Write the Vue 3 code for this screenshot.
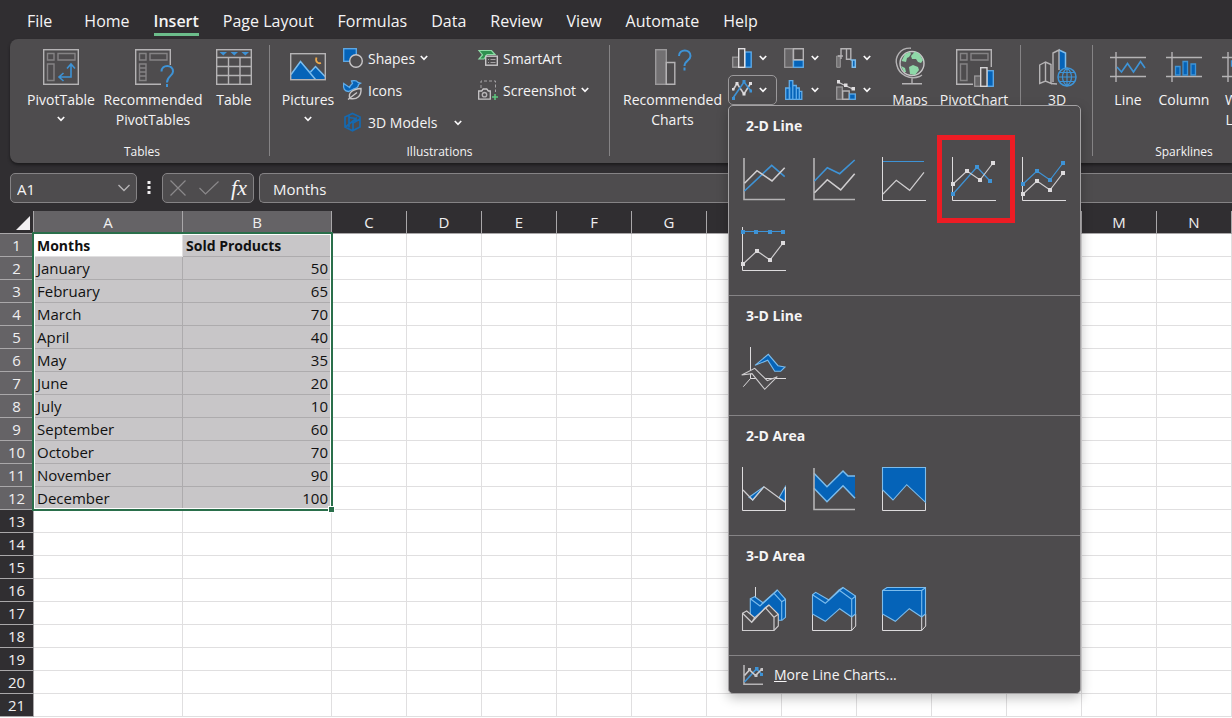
<script setup>
import { h, ref } from 'vue'

const tabs = ['File', 'Home', 'Insert', 'Page Layout', 'Formulas', 'Data', 'Review', 'View', 'Automate', 'Help']
const activeTab = ref('Insert')

const Chevron = () =>
  h('svg', { viewBox: '0 0 8 6', width: 8, height: 6, fill: 'none', stroke: '#f8f7f8', 'stroke-width': 1.7, 'aria-hidden': 'true' }, [
    h('path', { d: 'M.8 1 4 4.3 7.2 1' }),
  ])

const columns = ['A', 'B', 'C', 'D', 'E', 'F', 'G', 'H', 'I', 'J', 'K', 'L', 'M', 'N']
const records = [
  ['Months', 'Sold Products'],
  ['January', 50],
  ['February', 65],
  ['March', 70],
  ['April', 40],
  ['May', 35],
  ['June', 20],
  ['July', 10],
  ['September', 60],
  ['October', 70],
  ['November', 90],
  ['December', 100],
]
const rowCount = 21
const cell = (r, c) => (c < 2 && records[r - 1] ? records[r - 1][c] : '')
const selected = (r, c) => r <= records.length && c < 2

const nameBox = ref('A1')
const formula = ref('Months')
</script>

<template>
  <div class="app">
    <nav class="tabs" aria-label="Ribbon tabs">
      <button v-for="t in tabs" :key="t" type="button" class="tab" :class="{ active: t === activeTab }" @click="activeTab = t">{{ t }}</button>
    </nav>

    <section class="ribbon">
      <div class="group tables">
        <div class="tools">
          <button type="button" class="big w84">
            <svg class="i36" viewBox="0 0 36 36">
              <rect class="g" x=".7" y=".7" width="34.6" height="34.6" />
              <path class="d" d="M4.500 4.500h6.500v6.500H4.500zM15 4.500h17v6.500H15zM4.500 15h6.500v16.500H4.500z" />
              <path class="b w15" d="M28 15.500v12.500H16.500M24 19.500l4-4.500 4 4.500M20.500 24l-4.500 4 4.500 4" />
            </svg>
            <span>PivotTable</span>
            <span class="chev"><Chevron /></span>
          </button>
          <button type="button" class="big w100">
            <svg class="i36" viewBox="0 0 36 36">
              <path class="g" d="M26 35.300H.7V.7h34.600V16" />
              <path class="d" d="M4.500 4.500h6.500v6.500H4.500zM15 4.500h17v6.500H15zM4.500 15h6.500v16.500H4.500z" />
              <path class="d" d="M4.500 19h6.500M4.500 23h6.500M4.500 27h6.500" />
              <path class="b w2" d="M26.500 22.500c0-7.500 11.500-7.500 11.500 0 0 4.500-6 4.500-6 11M32 35v3" />
            </svg>
            <span>Recommended<br />PivotTables</span>
          </button>
          <button type="button" class="big w62">
            <svg class="i36" viewBox="0 0 36 36">
              <rect class="g" x=".7" y=".7" width="34.600" height="34.600" />
              <path class="g" d="M1 8.500h34M1 17.500h34M1 26.500h34M12.500 9v26M24 9v26" />
              <path fill="#3e93d6" d="M3.500 3h7.500L7.300 6.500zM14.500 3H22l-3.700 3.500zM25.500 3H33l-3.700 3.500z" />
            </svg>
            <span>Table</span>
          </button>
        </div>
        <h2>Tables</h2>
      </div>

      <div class="group illustrations">
        <div class="tools">
          <button type="button" class="big w66">
            <svg class="i36" viewBox="0 0 36 36">
              <path class="f" d="M1 25.500 10.500 12 19 21l2.500 0 4-4 9.500 9.500V30H1z" />
              <path class="lb" d="M1 25.500 10.500 12.500 25.500 30.500M20.500 23l5-5.500 9.500 10" />
              <rect class="g" x=".7" y="4.700" width="34.600" height="26" />
              <path fill="none" stroke="#eda94b" stroke-width="1.800" d="M26.500 8.500c-1.500 4 1.500 6.500 4.500 5.500" />
            </svg>
            <span>Pictures</span>
            <span class="chev"><Chevron /></span>
          </button>
          <div class="stack first">
            <button type="button" class="small">
              <svg class="i20" viewBox="0 0 20 20">
                <rect class="f lbs" x=".7" y=".7" width="12.600" height="12.600" />
                <circle cx="13" cy="13" r="6.300" fill="#4e4c4e" stroke="#c8c6c8" stroke-width="1.400" />
              </svg>
              <span>Shapes</span><Chevron />
            </button>
            <button type="button" class="small">
              <svg class="i20" viewBox="0 0 20 20">
                <path class="f lbs" d="M.7 3.500 6.500 7.500C7 5 8.500 4.500 9.500 3.500L8.500 1C12 .3 14 .8 15 2.500L17.500 3.200 15.500 4.500C15.500 7 13 8.500 10.500 9L5.500 11.500C1.500 11.500 0 8.500.7 3.500z" />
                <path d="M18 8.500C10 9 4.500 12.500 7 18.500 14.500 20 18.500 15.500 18 8.500zM5 19.500 14 12.500" fill="#4e4c4e" stroke="#c8c6c8" stroke-width="1.400" />
              </svg>
              <span>Icons</span>
            </button>
            <button type="button" class="small">
              <svg class="i20" viewBox="0 0 20 20">
                <path fill="none" stroke="#1569b0" stroke-width="1.700" d="M9.500 1.500 17 5v10l-7.500 3.800L2 15V5zM6 3.500v12M2.500 15 13 6.500V10M13 6.500l-7-1M10 10v8.500M10 11l7-4" />
              </svg>
              <span>3D Models</span><span class="wide-chev"><Chevron /></span>
            </button>
          </div>
          <div class="stack">
            <button type="button" class="small">
              <svg class="i20" viewBox="0 0 20 20">
                <path d="M1 2.500h12.500L17 6.500H9L6 11H1L4.500 7z" fill="#2f9150" stroke="#8fdba7" stroke-width="1.200" />
                <rect x="7.700" y="8.200" width="11.600" height="9" fill="#4e4c4e" stroke="#c8c6c8" stroke-width="1.400" />
                <path class="g1" d="M10 11.500h1M12.500 11.500h5M10 14.500h1M12.500 14.500h5" />
              </svg>
              <span>SmartArt</span>
            </button>
            <button type="button" class="small">
              <svg class="i20" viewBox="0 0 20 20">
                <path class="g1" stroke-dasharray="3 2" d="M3 8V1h14.500v11" />
                <path d="M.7 11h3l1.500-2h3.600l1.500 2h2v8.200H.7z" fill="#4e4c4e" stroke="#c8c6c8" stroke-width="1.300" />
                <circle class="g" cx="6.500" cy="14.700" r="2.200" />
                <path stroke="#5fc77f" stroke-width="1.500" d="M17 14v6M14 17h6" />
              </svg>
              <span>Screenshot</span><Chevron />
            </button>
          </div>
        </div>
        <h2>Illustrations</h2>
      </div>

      <div class="group charts">
        <div class="tools">
          <button type="button" class="big w111">
            <svg class="i36" viewBox="0 0 36 36">
              <rect x=".7" y=".7" width="10.600" height="34.600" fill="#727072" stroke="#9b999b" stroke-width="1.400" />
              <path class="g" d="M11.300 13.500h8.500v21.800h-8.500z" />
              <path class="b w2" d="M24 7c0-7.500 11.500-7.500 11.500 0 0 4.500-6 4.500-6 10M29.500 18.500v3" />
            </svg>
            <span>Recommended<br />Charts</span>
          </button>
          <div class="picker">
            <button type="button" class="mini" aria-label="Insert column chart">
              <svg class="i20" viewBox="0 0 20 20">
                <rect x=".7" y="9.200" width="6" height="10" fill="#666466" stroke="#9b999b" stroke-width="1.300" />
                <rect class="f lbs" x="13" y="4" width="6.200" height="15.200" />
                <rect x="6.700" y=".7" width="6" height="18.600" fill="#4e4c4e" stroke="#e0dee0" stroke-width="1.400" />
              </svg><Chevron />
            </button>
            <button type="button" class="mini" aria-label="Insert hierarchy chart">
              <svg class="i20" viewBox="0 0 20 20">
                <rect x=".7" y=".7" width="8.500" height="18.600" fill="#666466" stroke="#9b999b" stroke-width="1.300" />
                <rect class="f lbs" x="9.500" y="12" width="9.800" height="7.300" />
                <path class="g" d="M9.500.7h9.800v11H9.500z" />
              </svg><Chevron />
            </button>
            <button type="button" class="mini" aria-label="Insert waterfall chart">
              <svg class="i20" viewBox="0 0 20 20">
                <path d="M.7 19.300V8h3.600v11.300z" fill="#727072" stroke="#9b999b" />
                <path class="g" d="M5 11V.7h5.500V8M5 8h2M10.500.7h4.300v10.600h-4.300zM2 8h3" />
                <path fill="#0563b8" d="M16.500 12h2.500v7h-2.500z" />
                <path class="lb" d="M14.500 12h4.800v7.300h-3V12" />
              </svg><Chevron />
            </button>
            <div class="anchor">
              <button type="button" class="mini open" aria-label="Insert line or area chart" aria-expanded="true">
                <svg class="i20" viewBox="0 0 20 20">
                  <path class="wl w15" d="M1 10 5 3.500 12 14 18.500 3.500" />
                  <path class="b w15" d="M1 18 12 2 19 11" />
                  <path fill="#e0dee0" d="M0 8h2.500v2.500H0zM3.500 2h3v3h-3zM10.500 12.500h3v3h-3zM17 2h3v3h-3z" />
                  <path fill="#3e93d6" d="M10.500 0h3v3h-3zM17.500 9.500h2.500v3h-2.500zM0 17h3v3H0z" />
                </svg><Chevron />
              </button>

              <div class="menu" role="menu">
                <section>
                  <h3>2-D Line</h3>
                  <div class="gallery">
                    <button type="button" aria-label="Line">
                      <svg class="i44" viewBox="0 0 44 44">
                        <path class="ax2" d="M2 1v41.500h41" />
                        <path class="b w15" d="M2.500 34 29.700 8.300 42.700 19.700" />
                        <path class="wl w15" d="M2.500 26.300 15 13.700 30 24 42.700 10.700" />
                      </svg>
                    </button>
                    <button type="button" aria-label="Stacked line">
                      <svg class="i44" viewBox="0 0 44 44">
                        <path class="ax2" d="M2 1v41.500h41" />
                        <path class="b w15" d="M2.500 24 15.300 10.700 27.700 16.700 42.700 3" />
                        <path class="wl w15" d="M2.500 35.700 15.300 22.700 28.700 33 42.700 16.700" />
                      </svg>
                    </button>
                    <button type="button" aria-label="100% stacked line">
                      <svg class="i44" viewBox="0 0 44 44">
                        <path class="ax" d="M.5 0v43.500H44" />
                        <path class="b" d="M1 4.500h41" />
                        <path class="wl" d="M1 37 14.300 23.300 27.700 33.300 42 15.300" />
                      </svg>
                    </button>
                    <button type="button" class="marked" aria-label="Line with markers">
                      <svg class="i44" viewBox="0 0 44 44">
                        <path class="ax" d="M.5 0v43.500H44" />
                        <path class="b" d="M1 37 25 10 38 24" />
                        <path class="wl" d="M1 27 15 14 28 23 41 6" />
                        <path fill="#3e93d6" d="M-1 35h4v4h-4zM23 8h4v4h-4zM36 22h4v4h-4z" />
                        <path fill="#dddbdd" d="M-1 25h4v4h-4zM13 12h4v4h-4zM26 21h4v4h-4zM39 4h4v4h-4z" />
                      </svg>
                    </button>
                    <button type="button" aria-label="Stacked line with markers">
                      <svg class="i44" viewBox="0 0 44 44">
                        <path class="ax" d="M.5 0v43.500H44" />
                        <path class="b" d="M1 27 15 14 28 23 41 6" />
                        <path class="wl" d="M1 37 15 24 28 33 41 16" />
                        <path fill="#3e93d6" d="M-1 25h4v4h-4zM13 12h4v4h-4zM26 21h4v4h-4zM39 4h4v4h-4z" />
                        <path fill="#dddbdd" d="M-1 35h4v4h-4zM13 22h4v4h-4zM26 31h4v4h-4zM39 14h4v4h-4z" />
                      </svg>
                    </button>
                    <button type="button" aria-label="100% stacked line with markers">
                      <svg class="i44" viewBox="0 0 44 44">
                        <path class="ax" d="M.5 0v43.500H44" />
                        <path class="b" d="M1 4.500h40" />
                        <path class="wl" d="M1 37 15 24 28 33 41 16" />
                        <path fill="#3e93d6" d="M-1 3h4v4h-4zM12 3h4v4h-4zM26 3h4v4h-4zM39 3h4v4h-4z" />
                        <path fill="#dddbdd" d="M-1 35h4v4h-4zM13 22h4v4h-4zM26 31h4v4h-4zM39 14h4v4h-4z" />
                      </svg>
                    </button>
                  </div>
                </section>
                <section>
                  <h3>3-D Line</h3>
                  <div class="gallery">
                    <button type="button" aria-label="3-D line">
                      <svg class="i44" viewBox="0 0 44 44">
                        <path class="ax" d="M8.500 0v31.500H44M8.500 31.500 1.300 39.700" />
                        <path class="f lbs1" d="M13 18.300 26.300 7.300 36 18.700 43 20 38.700 24.300H32.700L25.700 13.300z" />
                        <path class="p" d="M-.3 28 12.700 21.300 25.300 33.700 35.300 29.700 22.700 42.300 10 26.700z" />
                      </svg>
                    </button>
                  </div>
                </section>
                <section>
                  <h3>2-D Area</h3>
                  <div class="gallery">
                    <button type="button" aria-label="Area">
                      <svg class="i44" viewBox="0 0 44 44">
                        <path class="f lbs1" d="M7 30.300 22 19.700 10.700 33zM37 30.700 43.300 19.700V35z" />
                        <path class="wl" d="M1 23 10.700 33 22 19.700 43 35.300" />
                        <path class="ax" d="M.5 0v43.500h43V20" />
                      </svg>
                    </button>
                    <button type="button" aria-label="Stacked area">
                      <svg class="i44" viewBox="0 0 44 44">
                        <path class="f" d="M2 6.300 15 19.700 31 4l5 5h7v22.300L31 18.700 15 34.700 2 21.300z" />
                        <path class="lb" d="M2 6.300 15 19.700 31 4l5 5h7M2 21.300 15 34.700 31 18.700 43 31.300" />
                        <path class="ax2" d="M2 1v41.500h41" />
                      </svg>
                    </button>
                    <button type="button" aria-label="100% stacked area">
                      <svg class="i44" viewBox="0 0 44 44">
                        <path class="ax" d="M.5 22v21.500h43V35" />
                        <path class="f lbs1" d="M.5.5h43v34.800L24.700 17.700 11 33 .5 22.700z" />
                      </svg>
                    </button>
                  </div>
                </section>
                <section>
                  <h3>3-D Area</h3>
                  <div class="gallery">
                    <button type="button" aria-label="3-D area">
                      <svg class="i44" viewBox="0 0 44 44">
                        <path class="ax" d="M13.500 0v12" />
                        <path class="f lbs1" d="M8.300 11.700 12.700 9.700 21 15.700 35.300 3 43.500 12.300V30.300L40 33.300H8.300z" />
                        <path class="lb1" d="M8.300 11.700 18 19 32 6.300 39.700 14.700V33M18 19l3-3.300M32 6.300 35.300 3M39.700 14.700l4-2.400" />
                        <path class="p" d="M.5 26.300 4.700 24 12.700 30.700 27 18 36.300 27.300V39L32 43.500H.5z" />
                        <path class="wl" d="M.5 26.300 9.700 35.300 23.300 20.700 32 30.300V43.500M9.700 35.300l3-4.600M23.300 20.700 27 18M32 30.300l4.300-3" />
                      </svg>
                    </button>
                    <button type="button" aria-label="3-D stacked area">
                      <svg class="i44" viewBox="0 0 44 44">
                        <path class="ax" d="M.5 27v16.500h39.200V30M39.700 43.500l4-4.500V27" />
                        <path class="f lbs1" d="M.5 7.700 3.700 5.300 17 13 31 .5 43.500 9V27L39.700 30 27.700 21.700 13.300 34.300 .5 27z" />
                        <path class="lb1" d="M.5 7.700 13.300 16.300 27 3 39.700 12.300V30M13.300 16.300l3.700-3.300M27 3l4-2.500M39.700 12.300l4-3.300" />
                      </svg>
                    </button>
                    <button type="button" aria-label="3-D 100% stacked area">
                      <svg class="i44" viewBox="0 0 44 44">
                        <path class="ax" d="M.5 27v16.500h39.200V30M39.700 43.500l4-4.500V27" />
                        <path class="f lbs1" d="M.5 3.500 5 .5h38.500V27L39.700 30 27.300 21.700 13.300 34.300 .5 27z" />
                        <path class="lb1" d="M.5 3.500h39.200V30M39.700 3.500l4-3" />
                      </svg>
                    </button>
                  </div>
                </section>
                <button type="button" class="more">
                  <svg class="i20" viewBox="0 0 20 20">
                    <path class="ax2" d="M1 0v19.200h19" />
                    <path class="b w15" d="M1.500 17 13.500 4 19 9.500" />
                    <path class="wl w15" d="M1.500 10.500 6.500 5 12.500 10.500 18.500 4.500" />
                    <path fill="#c8c6c8" d="M5 3h3v3H5zM11.500 9h3v3h-3zM17.500 3H20v3h-2.500z" />
                    <path fill="#3e93d6" d="M12 2h3.500v3.500H12zM17 8h3v3h-3z" />
                  </svg>
                  <span><u>M</u>ore Line Charts...</span>
                </button>
              </div>
            </div>
            <button type="button" class="mini" aria-label="Insert statistic chart">
              <svg class="i20" viewBox="0 0 20 20">
                <path class="f lbs" d="M1.700 19.300V8h4v11.300zM5.300 19.300V.7h3.500v18.600zM8.800 19.300V5.500h3.500v13.800zM12.300 19.300V8h3v11.300zM15.300 19.300v-8h2.500v8z" />
              </svg><Chevron />
            </button>
            <button type="button" class="mini" aria-label="Insert combo chart">
              <svg class="i20" viewBox="0 0 20 20">
                <rect x=".7" y="7" width="5.600" height="12.300" fill="#666466" stroke="#9b999b" stroke-width="1.300" />
                <path class="g" d="M6.700 11h6.500v8.300H6.700z" />
                <rect class="f lbs" x="13.500" y="14" width="5.800" height="5.300" />
                <path class="wl" d="M2 2 9 5.500 17 9" />
                <path fill="#e0dee0" d="M1 0h3v3.500H1zM8 3.500h3.500v3.500H8zM15.500 7H19v3.500h-3.500z" />
              </svg><Chevron />
            </button>
          </div>
          <button type="button" class="big w52">
            <svg class="i36" viewBox="0 0 36 36">
              <circle cx="20" cy="14.500" r="12" fill="#5a585a" stroke="#c8c6c8" stroke-width="1.400" />
              <path fill="#8fd8a8" d="M9.500 12 13 5l5-2 1 2-2 3-2 1-1 4zM19 7l4-4.500 4.500 2.500 3.500 6-2 3-3-1-2-3-4 0zM17 18l4-2 5 2 1 3-4 5-5-1zM9 17l4 2 1 4-2 0z" />
              <path class="g" d="M19-.8C8-1.500 2.500 8 4.800 16 7 26 18 31 27.500 27.500L30 26M20 29.500V34M10 34.800h20" />
            </svg>
            <span>Maps</span>
          </button>
          <button type="button" class="big w76">
            <svg class="i36" viewBox="0 0 36 36">
              <path class="g" d="M17 35.300H.7V.7h34.600V18" />
              <path class="d" d="M4.500 4.500h6.500v6.500H4.500zM15 4.500h17v6.500H15zM4.500 15h6.500v16.500H4.500z" />
              <rect x="18.700" y="27" width="6" height="10.300" fill="#666466" stroke="#9b999b" stroke-width="1.300" />
              <rect class="f lbs" x="31" y="21.700" width="6.300" height="15.600" />
              <rect x="24.700" y="18.700" width="6.300" height="18.600" fill="#4e4c4e" stroke="#d5d3d5" stroke-width="1.400" />
            </svg>
            <span>PivotChart</span>
          </button>
        </div>
      </div>

      <div class="group tours">
        <div class="tools">
          <button type="button" class="big w62">
            <svg class="i36" viewBox="0 0 36 36">
              <path class="g" d="M.7 16 6.500 13l5.500 2.500v19L6.500 32 .7 34.500zM6.500 13v19" />
              <path class="f" d="M20 1l6.500 3v16h-6.500z" />
              <path class="lb" d="M20 1l6.500 3v15" />
              <path class="g" d="M14 33V4l6-3v20M12 34.500l6 .5" />
              <circle cx="28" cy="28" r="9" fill="#4e4c4e" stroke="#3e93d6" stroke-width="1.500" />
              <path class="b" d="M19 28h18M28 19v18M20.500 23.500h15M20.500 32.500h15M28 19c-6 5-6 13 0 18M28 19c6 5 6 13 0 18" />
            </svg>
            <span>3D</span>
          </button>
        </div>
      </div>

      <div class="group sparklines">
        <div class="tools">
          <button type="button" class="big w56">
            <svg class="i36" viewBox="0 0 36 36">
              <path class="g" d="M0 8.500h36M0 27.500h36M6 3v30" />
              <path class="b w15" d="M7 18l4.500 5 6-8.500 6 8.500 7-10.500 4.500 6.500" />
            </svg>
            <span>Line</span>
          </button>
          <button type="button" class="big w56">
            <svg class="i36" viewBox="0 0 36 36">
              <path class="g" d="M0 8.500h36M0 27.500h36M6 3v30" />
              <path class="f lbb" d="M9.500 17.500H14v8.500H9.500zM17 12.500h4.500V26H17zM25 15h4.500v11H25z" />
            </svg>
            <span>Column</span>
          </button>
          <button type="button" class="big w56">
            <svg class="i36" viewBox="0 0 36 36">
              <path class="g" d="M0 8.500h36M0 27.500h36M6 3v30" />
              <path class="f lbb" d="M9.500 12H14v5H9.500zM17 19h4.500v5H17zM25 12h4.500v5H25z" />
            </svg>
            <span>Win/<br />Loss</span>
          </button>
        </div>
        <h2>Sparklines</h2>
      </div>
    </section>

    <div class="formula-bar">
      <div class="box name">
        <input v-model="nameBox" aria-label="Name box" />
        <button type="button" aria-label="Show names">
          <svg width="14" height="10" viewBox="0 0 14 10"><path class="g" d="M1.500 2 7 7.500 12.500 2" /></svg>
        </button>
      </div>
      <svg class="dots" width="4" height="14" viewBox="0 0 4 14"><path fill="#f0eef0" d="M.5 0h3v3h-3zM.5 5h3v3h-3zM.5 10h3v3h-3z" /></svg>
      <div class="box actions">
        <button type="button" aria-label="Cancel">
          <svg width="16" height="16" viewBox="0 0 16 16"><path class="dim" d="M.5.5l15 15M15.500.5l-15 15" /></svg>
        </button>
        <button type="button" aria-label="Enter">
          <svg width="20" height="14" viewBox="0 0 20 14"><path class="dim" d="M.5 7l6 6L19.500.5" /></svg>
        </button>
        <button type="button" class="fx" aria-label="Insert function">fx</button>
      </div>
      <div class="box formula"><input v-model="formula" aria-label="Formula" /></div>
    </div>

    <main class="sheet">
      <table>
        <colgroup>
          <col class="c-head" />
          <col v-for="(c, i) in columns" :key="c" :class="i < 2 ? 'c-wide' : 'c-norm'" />
        </colgroup>
        <thead>
          <tr>
            <td class="corner"><svg width="14" height="14" viewBox="0 0 14 14"><path fill="#f3f1f3" d="M14 0v14H0z" /></svg></td>
            <th v-for="(c, i) in columns" :key="c" scope="col" :class="{ on: i < 2 }">{{ c }}</th>
          </tr>
        </thead>
        <tbody>
          <tr v-for="r in rowCount" :key="r">
            <th scope="row" :class="{ on: r <= records.length }">{{ r }}</th>
            <td
              v-for="(c, i) in columns"
              :key="c"
              :class="{ sel: selected(r, i) && (r > 1 || i > 0), bold: r === 1, num: r > 1 && i === 1 }"
            >{{ cell(r, i) }}</td>
          </tr>
        </tbody>
      </table>
      <div class="selection"></div>
    </main>
  </div>
</template>

<style>
body {
  background: #302e31;
}
</style>

<style scoped>
.app {
  height: 100vh;
  overflow: hidden;
  display: flex;
  flex-direction: column;
  background: #302e31;
  color: #f5f4f5;
  font: 14px/20px 'Open Sans', 'Noto Sans', sans-serif;
}
button,
input {
  font: inherit;
  color: inherit;
  background: none;
  border: 0;
  padding: 0;
  margin: 0;
}
svg {
  display: block;
  flex: none;
  overflow: visible;
}
h2,
h3 {
  margin: 0;
}

/* tabs */
.tabs {
  flex: none;
  display: flex;
  gap: 24px;
  padding: 10px 0 3px 27px;
}
.tab {
  font-size: 16px;
  line-height: 23px;
  border-bottom: 3px solid transparent;
}
.tab:first-child {
  margin-right: 8px;
}
.tab.active {
  font-weight: 600;
  border-bottom-color: #6cbd8b;
}

/* ribbon */
.ribbon {
  flex: none;
  display: flex;
  height: 124px;
  margin-left: 10px;
  background: #4e4c4e;
  border-radius: 8px 0 0 8px;
  box-shadow: 0 2px 3px #1c1b1d;
}
.group {
  flex: none;
  display: flex;
  flex-direction: column;
  position: relative;
}
.group + .group::before {
  content: '';
  position: absolute;
  left: -1px;
  top: 6px;
  bottom: 7px;
  border-left: 1px solid #858385;
}
.tools {
  flex: 1;
  display: flex;
}
.group h2 {
  font-size: 12px;
  line-height: 16px;
  font-weight: 400;
  text-align: center;
  padding-bottom: 3px;
}
.tables {
  padding: 0 5px 0 9px;
}
.illustrations {
  box-sizing: border-box;
  width: 340px;
  padding-left: 5px;
}
.illustrations h2 {
  padding-right: 6px;
}
.charts {
  padding: 0 9px 0 7px;
}
.tours {
  padding: 0 5px;
}
.sparklines {
  padding: 0 7px;
}
.big {
  display: flex;
  flex-direction: column;
  align-items: center;
  justify-content: flex-start;
  gap: 5px;
  padding-top: 10px;
  white-space: nowrap;
}
.big .chev {
  height: 20px;
  margin-top: -6px;
  display: flex;
  align-items: center;
}
.w52 { width: 52px; }
.w56 { width: 56px; }
.w62 { width: 62px; }
.w66 { width: 66px; }
.w76 { width: 76px; }
.w84 { width: 84px; }
.w100 { width: 100px; }
.w111 { width: 111px; }
.i20 { width: 20px; height: 20px; }
.i36 { width: 36px; height: 36px; }
.i44 { width: 44px; height: 44px; }
.stack {
  display: flex;
  flex-direction: column;
  align-items: flex-start;
  padding: 3px 0 0 2px;
}
.stack.first {
  width: 133px;
}
.small {
  display: flex;
  align-items: center;
  gap: 5px;
  height: 32px;
  white-space: nowrap;
}
.small span {
  padding-top: 1px;
}
.wide-chev {
  margin-left: 12px;
}
.picker {
  display: grid;
  grid-template-columns: repeat(3, 52px);
  grid-auto-rows: 30px;
  row-gap: 2px;
  padding-top: 4px;
}
.mini {
  box-sizing: border-box;
  width: 49px;
  height: 30px;
  display: flex;
  align-items: center;
  gap: 7px;
  padding-left: 3px;
  border: 1px solid transparent;
}
.mini.open {
  border-color: #9b999b;
  border-radius: 5px;
}
.anchor {
  position: relative;
}

/* icon strokes */
.g { fill: none; stroke: #b5b3b5; stroke-width: 1.400; }
.g1 { fill: none; stroke: #a5a3a5; stroke-width: 1; }
.d { fill: none; stroke: #858385; stroke-width: 1.400; }
.b { fill: none; stroke: #3e93d6; stroke-width: 1.200; }
.wl { fill: none; stroke: #cfcdcf; stroke-width: 1.200; }
.w15 { stroke-width: 1.600; }
.w2 { stroke-width: 2; }
.f { fill: #0563b8; }
.lb { fill: none; stroke: #7cbcec; stroke-width: 1.500; }
.lb1 { fill: none; stroke: #7cbcec; stroke-width: 1.100; }
.lbs { stroke: #61adea; stroke-width: 1.300; }
.lbs1 { stroke: #7cbcec; stroke-width: 1.100; }
.lbb { stroke: #3e93d6; stroke-width: 1.300; }
.ax { fill: none; stroke: #dddbdd; stroke-width: 1; }
.ax2 { fill: none; stroke: #b5b3b5; stroke-width: 1.600; }
.p { fill: #4e4c4e; stroke: #cfcdcf; stroke-width: 1.100; }
.dim { fill: none; stroke: #8b898b; stroke-width: 1.200; }

/* chart menu */
.menu {
  position: absolute;
  z-index: 2;
  left: 0;
  top: 30px;
  width: 351px;
  background: #4d4b4d;
  border: 1px solid #a3a1a3;
  border-radius: 5px;
  box-shadow: 0 4px 12px rgba(0, 0, 0, 0.25);
}
.menu section {
  padding-bottom: 11px;
  border-bottom: 1px solid #858385;
}
.menu h3 {
  padding: 2px 0 0 17px;
  font-size: 14px;
  line-height: 36px;
  font-weight: 700;
}
.gallery {
  display: grid;
  grid-template-columns: repeat(5, 70px);
  grid-auto-rows: 70px;
}
.gallery button {
  display: flex;
  align-items: center;
  justify-content: center;
  position: relative;
}
.marked::after {
  content: '';
  position: absolute;
  inset: -9px -6px -9px -2px;
  border: 5px solid #ed1c24;
}
.more {
  display: flex;
  align-items: center;
  gap: 11px;
  width: 100%;
  height: 37px;
  padding-left: 14px;
}

/* formula bar */
.formula-bar {
  flex: none;
  display: flex;
  align-items: center;
  padding: 10px 0 8px 10px;
  font-size: 15px;
}
.box {
  box-sizing: border-box;
  height: 30px;
  display: flex;
  align-items: center;
  background: #4e4c4e;
  border: 1px solid #858385;
  border-radius: 5px;
}
.box input {
  flex: 1;
  min-width: 0;
  padding-top: 1px;
}
.name {
  width: 127px;
  padding: 0 5px 0 6px;
}
.dots {
  margin: 0 11px 0 10px;
}
.actions {
  width: 92px;
  padding: 0 6px 0 7px;
  margin-right: 5px;
  justify-content: space-between;
}
.fx {
  font: italic 400 22px/24px 'Liberation Serif', serif;
}
.formula {
  flex: 1;
  border-right: 0;
  border-radius: 5px 0 0 5px;
  padding-left: 13px;
}

/* sheet */
.sheet {
  flex: 1;
  min-height: 0;
  position: relative;
  overflow: hidden;
  background: #fff;
}
table {
  width: 100%;
  table-layout: fixed;
  border-collapse: separate;
  border-spacing: 0;
  font-size: 15px;
}
.c-head { width: 34px; }
.c-wide { width: 149px; }
.c-norm { width: auto; }
th,
td {
  box-sizing: border-box;
  height: 23px;
  padding: 1px 3px 0;
  line-height: 21px;
  border-right: 1px solid #e0dfe0;
  border-bottom: 1px solid #e0dfe0;
  white-space: nowrap;
}
tbody td {
  color: #111;
}
th {
  padding: 1px 0 0;
  text-align: center;
  font-weight: 400;
  color: #f0eff0;
  background: #302e31;
  border-color: #a9a7a9;
}
th.on {
  background: #656366;
}
.corner {
  background: #302e31;
  border-color: #a9a7a9;
}
.corner svg {
  margin-left: auto;
}
.sel {
  background: #c8c6c8;
  border-color: #adabad;
}
.bold {
  font-size: 14px;
  font-weight: 700;
}
.num {
  text-align: right;
}
.selection {
  position: absolute;
  left: 32px;
  top: 21px;
  width: 301px;
  height: 279px;
  box-sizing: border-box;
  border: 2px solid #2a6f4b;
  box-shadow: inset 0 0 0 1px #fff;
}
.selection::after {
  content: '';
  position: absolute;
  right: -4px;
  bottom: -4px;
  width: 5px;
  height: 5px;
  background: #2a6f4b;
  border: 1px solid #fff;
}
</style>
